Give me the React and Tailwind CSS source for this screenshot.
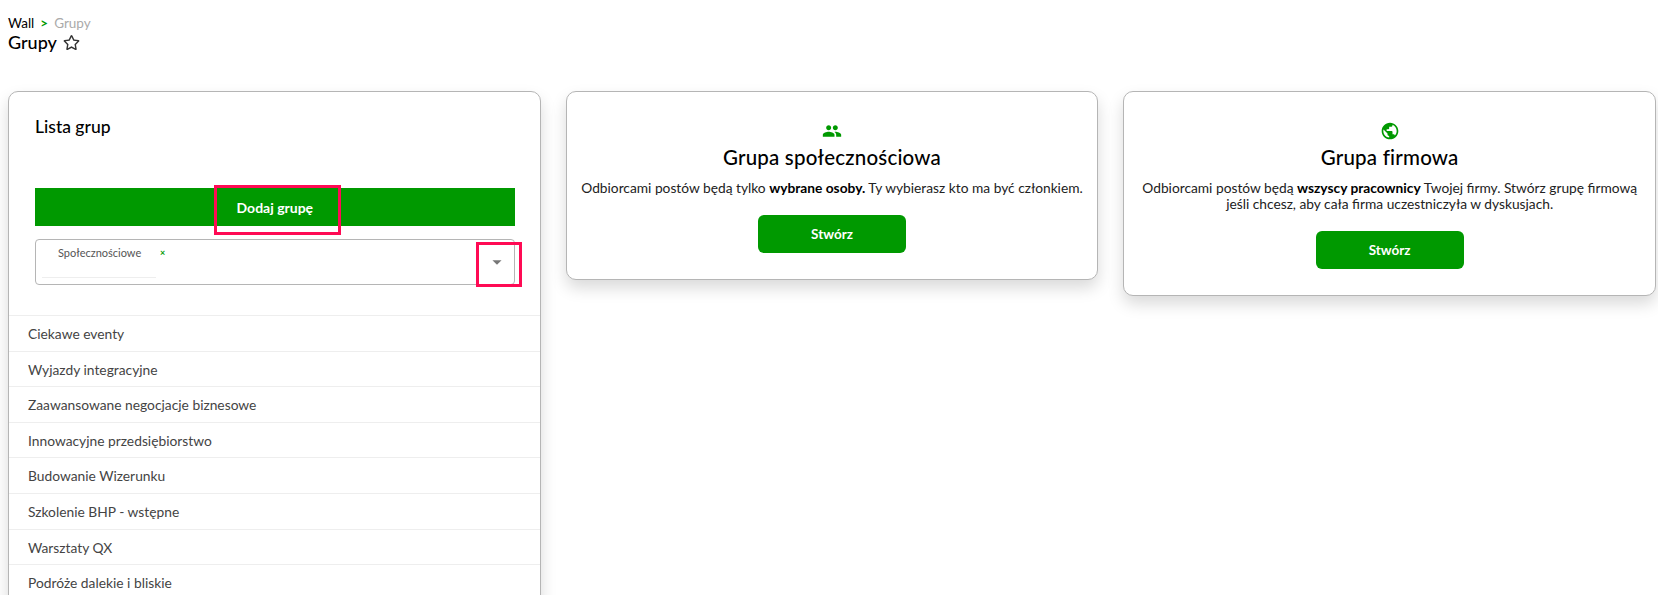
import React from "react";
import { MdPeople, MdPublic, MdArrowDropDown } from "react-icons/md";
import { FaRegStar } from "react-icons/fa";

const groups = [
  "Ciekawe eventy",
  "Wyjazdy integracyjne",
  "Zaawansowane negocjacje biznesowe",
  "Innowacyjne przedsiębiorstwo",
  "Budowanie Wizerunku",
  "Szkolenie BHP - wstępne",
  "Warsztaty QX",
  "Podróże dalekie i bliskie",
];

function CreateCard({ icon, title, children }) {
  return (
    <div className="bg-white border border-[#b5b5b5] rounded-[10px] shadow-[0_8px_16px_rgba(0,0,0,0.15)] px-2 pt-[29px] pb-[26px] flex flex-col items-center text-center">
      {icon}
      <h2 className="text-[20.5px] leading-[26px] font-medium text-black mt-[3px] tracking-[0.2px]">{title}</h2>
      <p className="text-[13.75px] leading-[16px] text-[#222] mt-[10px]">{children}</p>
      <button className="w-[148px] h-[38px] bg-[#009900] rounded-md text-white text-[13.5px] font-bold mt-[19px]">
        Stwórz
      </button>
    </div>
  );
}

export default function App() {
  return (
    <div className="h-screen overflow-hidden bg-white pl-2 pr-[2px] font-['Lato','Open_Sans',sans-serif]">
      <div className="pt-[14px] h-[91px]">
        <div className="flex items-center gap-[6px] text-[13.5px] leading-[18px]">
          <span className="text-black">Wall</span>
          <span className="text-[#009900] font-bold">&gt;</span>
          <span className="text-[#aaa]">Grupy</span>
        </div>
        <div className="flex items-center gap-[6px] text-[18px] leading-[20px] font-medium text-black">
          Grupy <FaRegStar className="text-[17px] text-[#333]" />
        </div>
      </div>

      <div className="grid grid-cols-3 gap-[25px] items-start">
        <div className="relative bg-white border border-[#b5b5b5] rounded-[10px] shadow-[0_8px_16px_rgba(0,0,0,0.15)] h-[600px]">
          <div className="pl-[26px] pr-[25px] pt-[25px] pb-[30px]">
            <h3 className="text-[17.5px] leading-[20px] font-medium text-black">Lista grup</h3>
            <button className="w-full h-[38px] bg-[#009900] text-white text-[14px] font-bold mt-[51px]">
              Dodaj grupę
            </button>
            <div className="flex border border-[#b5b5b5] rounded-[4px] h-[46px] mt-[13px]">
              <div className="flex-1 pl-[6px] pt-[5px]">
                <div className="flex items-start">
                  <span className="w-[114px] h-[33px] border-b border-[#eee] pl-[16px] text-[11px] leading-[16px] text-[#555]">
                    Społecznościowe
                  </span>
                  <span className="ml-[4px] text-[9px] leading-[16px] font-bold text-[#009900]">×</span>
                </div>
              </div>
              <div className="w-[34px] flex items-center justify-center">
                <MdArrowDropDown className="text-[22px] text-[#777]" />
              </div>
            </div>
          </div>
          <ul>
            {groups.map((g) => (
              <li
                key={g}
                className="border-t border-[#eee] h-[35.6px] pl-[19px] text-[13.8px] leading-[35px] text-[#444]"
              >
                {g}
              </li>
            ))}
          </ul>
          <div className="absolute left-[205px] top-[93px] w-[127px] h-[50px] border-[3px] border-[#ff0a54]"></div>
          <div className="absolute left-[467px] top-[150px] w-[46px] h-[45px] border-[3px] border-[#ff0a54]"></div>
        </div>

        <CreateCard icon={<MdPeople className="text-[20px] text-[#009900]" />} title="Grupa społecznościowa">
          Odbiorcami postów będą tylko <b className="font-bold text-black">wybrane osoby.</b> Ty wybierasz kto ma być członkiem.
        </CreateCard>

        <CreateCard icon={<MdPublic className="text-[20px] text-[#009900]" />} title="Grupa firmowa">
          Odbiorcami postów będą <b className="font-bold text-black">wszyscy pracownicy</b> Twojej firmy. Stwórz grupę firmową
          <br />
          jeśli chcesz, aby cała firma uczestniczyła w dyskusjach.
        </CreateCard>
      </div>
    </div>
  );
}
